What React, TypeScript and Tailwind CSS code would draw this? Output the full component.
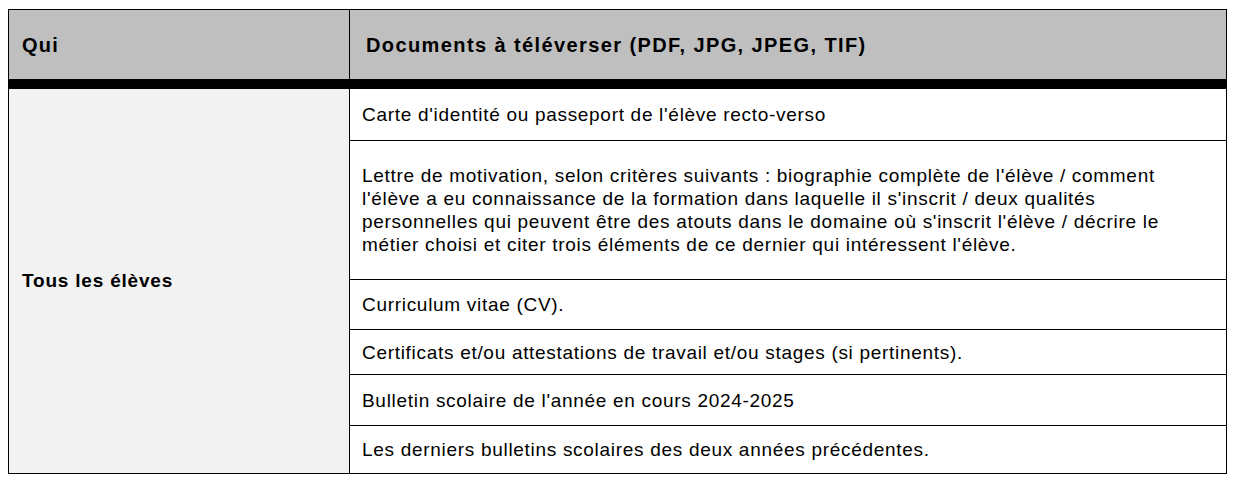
const DOCS = [
  { text: "Carte d'identité ou passeport de l'élève recto-verso", h: "h-[52px]" },
  {
    text: "Lettre de motivation, selon critères suivants : biographie complète de l'élève / comment l'élève a eu connaissance de la formation dans laquelle il s'inscrit / deux qualités personnelles qui peuvent être des atouts dans le domaine où s'inscrit l'élève / décrire le métier choisi et citer trois éléments de ce dernier qui intéressent l'élève.",
    h: "h-[139px]",
  },
  { text: "Curriculum vitae (CV).", h: "h-[50px]" },
  { text: "Certificats et/ou attestations de travail et/ou stages (si pertinents).", h: "h-[45px]" },
  { text: "Bulletin scolaire de l'année en cours 2024-2025", h: "h-[51px]" },
  { text: "Les derniers bulletins scolaires des deux années précédentes.", h: "h-[47px]" },
];

export default function App() {
  return (
    <div className="min-h-screen bg-white pt-[9px] pl-[8px] font-['Liberation_Sans',Arial,sans-serif] text-black">
      <div className="w-[1219px] border border-black">
        <div className="flex h-[79px] bg-[#bfbfbf] border-b-[10px] border-black">
          <div className="w-[341px] border-r border-black flex items-center pl-[13px] text-[20px] tracking-[1.3px] font-bold">
            Qui
          </div>
          <div className="flex-1 flex items-center pl-[16px] text-[20px] tracking-[1.4px] font-bold">
            Documents à téléverser (PDF, JPG, JPEG, TIF)
          </div>
        </div>
        <div className="flex">
          <div className="w-[341px] bg-[#f2f2f2] border-r border-black flex items-center pl-[13px] text-[19px] tracking-[0.8px] font-bold">
            Tous les élèves
          </div>
          <div className="flex-1 flex flex-col">
            {DOCS.map((d, i) => (
              <div
                key={i}
                className={`${d.h} flex items-center pl-[12px] pr-[55px] text-[19px] tracking-[0.7px] leading-[23px] ${
                  i < DOCS.length - 1 ? "border-b border-black" : ""
                }`}
              >
                <p>{d.text}</p>
              </div>
            ))}
          </div>
        </div>
      </div>
    </div>
  );
}
